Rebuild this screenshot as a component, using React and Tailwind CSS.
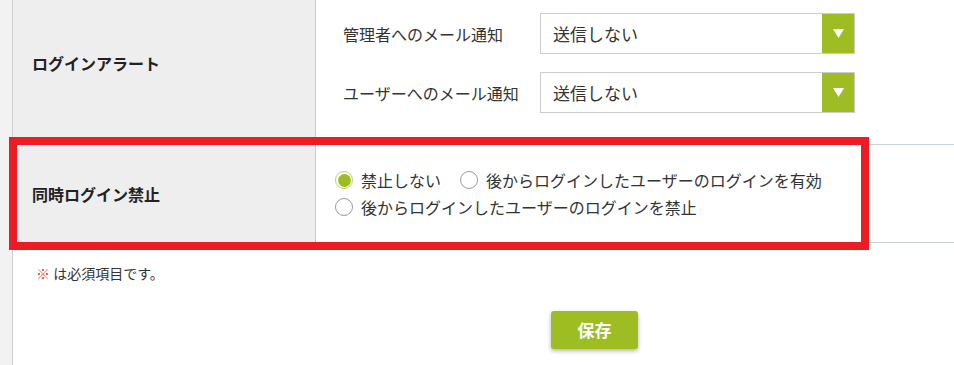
const FONT = { fontFamily: '"Noto Sans CJK JP", "Noto Sans", sans-serif' };

function SelectBox({ value }) {
  return (
    <div className="flex h-[41px] w-[315px] border border-[#cccccc] bg-white">
      <div className="flex flex-1 items-center pl-[12px] text-[17px] text-[#333333]">{value}</div>
      <div className="flex w-[32px] items-center justify-center bg-[#9dbd22]">
        <svg width="11" height="9" viewBox="0 0 11 9">
          <path d="M0 0 L11 0 L5.5 9 Z" fill="#ffffff" />
        </svg>
      </div>
    </div>
  );
}

function Radio({ checked, label }) {
  return (
    <label className="flex h-[27px] items-center">
      {checked ? (
        <span className="flex h-[18px] w-[18px] items-center justify-center rounded-full border border-[#b9d36a] bg-white">
          <span className="h-[13px] w-[13px] rounded-full bg-[#9dbd22]" />
        </span>
      ) : (
        <span className="h-[18px] w-[18px] rounded-full border border-[#9a9a9a] bg-white" />
      )}
      <span className="ml-[8px] text-[16px] text-[#333333]">{label}</span>
    </label>
  );
}

export default function App() {
  return (
    <div className="h-[365px] overflow-hidden bg-[#f2f2f2] pl-[12px]" style={FONT}>
      <div className="relative flow-root h-full border-l border-[#cfcfcf] bg-white">
        <div className="-mt-[18px]">
          {/* ログインアラート */}
          <div className="flex border-b border-[#c9d1db]">
            <div className="flex w-[303px] items-center border-r border-[#c3cad3] bg-[#eeeeee] pl-[19px] text-[16px] font-bold text-[#222222]">
              ログインアラート
            </div>
            <div className="flex flex-col gap-[18px] py-[31px] pl-[27px]">
              <div className="flex items-center">
                <span className="w-[197px] text-[16px] text-[#333333]">管理者へのメール通知</span>
                <SelectBox value="送信しない" />
              </div>
              <div className="flex items-center">
                <span className="w-[197px] text-[16px] text-[#333333]">ユーザーへのメール通知</span>
                <SelectBox value="送信しない" />
              </div>
            </div>
          </div>

          {/* 同時ログイン禁止 */}
          <div className="flex h-[98px] border-b border-[#c9d1db]">
            <div className="flex w-[303px] items-center border-r border-[#c3cad3] bg-[#eeeeee] pl-[19px] text-[16px] font-bold text-[#222222]">
              同時ログイン禁止
            </div>
            <div className="flex items-center pl-[19px]">
              <div className="flex w-[520px] flex-wrap gap-x-[19px]">
                <Radio checked label="禁止しない" />
                <Radio label="後からログインしたユーザーのログインを有効" />
                <Radio label="後からログインしたユーザーのログインを禁止" />
              </div>
            </div>
          </div>
        </div>

        <p className="mt-[20px] pl-[23px] text-[14px] leading-[20px] text-[#333333]">
          <span className="text-[#e8403f]">※</span> は必須項目です。
        </p>

        <div className="mt-[28px] pl-[538px]">
          <button className="h-[38px] w-[87px] rounded-[3px] bg-[#9dbd22] text-[17px] font-bold text-white shadow-[0_2px_4px_rgba(0,0,0,0.3)]">
            保存
          </button>
        </div>

        {/* annotation frame */}
        <div className="absolute left-[-4px] top-[137px] h-[113px] w-[860px] border-[8px] border-[#ed1c24]" />
      </div>
    </div>
  );
}
